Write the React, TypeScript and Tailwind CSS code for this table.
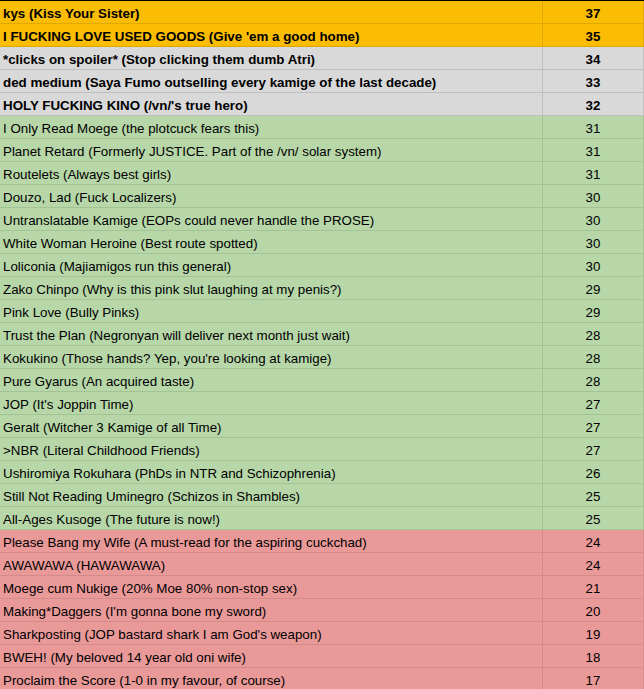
const rows: [string, number, "o" | "g" | "n" | "r", boolean][] = [
  ["kys (Kiss Your Sister)", 37, "o", true],
  ["I FUCKING LOVE USED GOODS (Give 'em a good home)", 35, "o", true],
  ["*clicks on spoiler* (Stop clicking them dumb Atri)", 34, "g", true],
  ["ded medium (Saya Fumo outselling every kamige of the last decade)", 33, "g", true],
  ["HOLY FUCKING KINO (/vn/'s true hero)", 32, "g", true],
  ["I Only Read Moege (the plotcuck fears this)", 31, "n", false],
  ["Planet Retard (Formerly JUSTICE. Part of the /vn/ solar system)", 31, "n", false],
  ["Routelets (Always best girls)", 31, "n", false],
  ["Douzo, Lad (Fuck Localizers)", 30, "n", false],
  ["Untranslatable Kamige (EOPs could never handle the PROSE)", 30, "n", false],
  ["White Woman Heroine (Best route spotted)", 30, "n", false],
  ["Loliconia (Majiamigos run this general)", 30, "n", false],
  ["Zako Chinpo (Why is this pink slut laughing at my penis?)", 29, "n", false],
  ["Pink Love (Bully Pinks)", 29, "n", false],
  ["Trust the Plan (Negronyan will deliver next month just wait)", 28, "n", false],
  ["Kokukino (Those hands? Yep, you're looking at kamige)", 28, "n", false],
  ["Pure Gyarus (An acquired taste)", 28, "n", false],
  ["JOP (It's Joppin Time)", 27, "n", false],
  ["Geralt (Witcher 3 Kamige of all Time)", 27, "n", false],
  [">NBR (Literal Childhood Friends)", 27, "n", false],
  ["Ushiromiya Rokuhara (PhDs in NTR and Schizophrenia)", 26, "n", false],
  ["Still Not Reading Uminegro (Schizos in Shambles)", 25, "n", false],
  ["All-Ages Kusoge (The future is now!)", 25, "n", false],
  ["Please Bang my Wife (A must-read for the aspiring cuckchad)", 24, "r", false],
  ["AWAWAWA (HAWAWAWA)", 24, "r", false],
  ["Moege cum Nukige (20% Moe 80% non-stop sex)", 21, "r", false],
  ["Making*Daggers (I'm gonna bone my sword)", 20, "r", false],
  ["Sharkposting (JOP bastard shark I am God's weapon)", 19, "r", false],
  ["BWEH! (My beloved 14 year old oni wife)", 18, "r", false],
  ["Proclaim the Score (1-0 in my favour, of course)", 17, "r", false],
];

const tone = {
  o: "bg-[#fbbc04] border-[#e0a800]",
  g: "bg-[#d9d9d9] border-[#bfbfbf]",
  n: "bg-[#b7d7a8] border-[#a3c395]",
  r: "bg-[#ea9999] border-[#d38a8a]",
};

export default function App() {
  return (
    <div className="w-[644px] bg-white border-t border-black font-['Liberation_Sans',Arial,sans-serif] text-[13.33px] text-black">
      {rows.map(([name, score, t, bold]) => (
        <div key={name} className={`flex h-[23px] border-b ${tone[t]} ${bold ? "font-bold" : ""}`}>
          <div className={`w-[543px] shrink-0 border-r ${tone[t]} pl-[3px] pt-[3px] leading-[19px] whitespace-nowrap overflow-hidden`}>
            {name}
          </div>
          <div className={`flex-1 border-r ${tone[t]} text-center pt-[3px] leading-[19px]`}>{score}</div>
        </div>
      ))}
    </div>
  );
}
